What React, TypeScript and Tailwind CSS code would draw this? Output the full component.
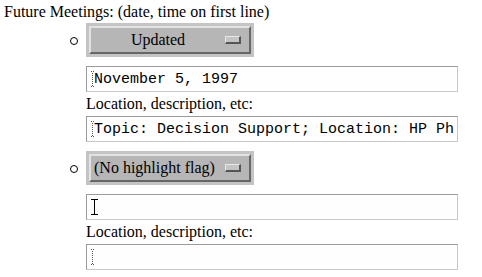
import React from "react";

const serif = { fontFamily: '"Liberation Serif", "Times New Roman", serif' };
const mono = { fontFamily: '"Liberation Mono", "Courier New", monospace' };

function DottedCaret() {
  return (
    <svg width="4" height="16" viewBox="0 0 4 16" className="shrink-0">
      <g fill="#555">
        <rect x="0" y="0" width="1" height="1" />
        <rect x="2" y="0" width="1" height="1" />
        {Array.from({ length: 7 }).map((_, i) => (
          <rect key={i} x="1" y={2 + i * 2} width="1" height="1" />
        ))}
        <rect x="0" y="15" width="1" height="1" />
        <rect x="2" y="15" width="1" height="1" />
      </g>
    </svg>
  );
}

function IBeam() {
  return (
    <svg width="7" height="16" viewBox="0 0 7 16" className="shrink-0">
      <g fill="#000">
        <rect x="0" y="0" width="7" height="1" />
        <rect x="3" y="1" width="1" height="14" />
        <rect x="0" y="15" width="7" height="1" />
      </g>
    </svg>
  );
}

function OptionButton({ label, center }: { label: string; center?: boolean }) {
  return (
    <div className="w-[168px] bg-[#c4c4c4] p-[3px]">
      <div className="flex h-[28px] items-center border-l-2 border-t-2 border-r-2 border-b-2 border-l-[#e2e2e2] border-t-[#e2e2e2] border-r-[#666666] border-b-[#666666] bg-[#b6b6b6]">
        <span
          className={`flex-1 whitespace-nowrap text-[16px] leading-none text-black ${center ? "text-center" : "pl-[3px]"}`}
          style={serif}
        >
          {label}
        </span>
        <span className="mr-[8px] h-[8px] w-[16px] shrink-0 border-l border-t border-r-2 border-b-2 border-l-[#e8e8e8] border-t-[#e8e8e8] border-r-[#555555] border-b-[#555555] bg-[#c4c4c4]" />
      </div>
    </div>
  );
}

function TextBox({ children }: { children?: React.ReactNode }) {
  return (
    <div className="flex h-[26px] w-[372px] items-center overflow-hidden whitespace-nowrap border border-t-[#9c9c9c] border-l-[#9c9c9c] border-r-[#c8c8c8] border-b-[#c8c8c8] bg-[#fefefe] pl-[4px]">
      {children}
    </div>
  );
}

function Label() {
  return (
    <div className="flex h-[24px] items-center text-[16px] leading-none text-black" style={serif}>
      Location, description, etc:
    </div>
  );
}

function Item({
  button,
  center,
  first,
  second,
}: {
  button: string;
  center?: boolean;
  first: React.ReactNode;
  second: React.ReactNode;
}) {
  return (
    <div className="flex">
      <div className="flex h-[35px] w-[20px] items-center pl-[4px]">
        <span className="block h-[8px] w-[8px] rounded-full border border-black" />
      </div>
      <div className="flex flex-col">
        <OptionButton label={button} center={center} />
        <div className="h-[9px]" />
        <TextBox>{first}</TextBox>
        <Label />
        <TextBox>{second}</TextBox>
      </div>
    </div>
  );
}

export default function App() {
  return (
    <div className="h-[277px] w-[482px] overflow-hidden bg-white text-black">
      <div className="pl-[4px] pt-[2px] text-[16px] leading-[19px]" style={serif}>
        Future Meetings: (date, time on first line)
      </div>
      <div className="flex flex-col gap-[9px] pl-[66px] pt-[2px]">
        <Item
          button="Updated"
          center
          first={
            <div className="flex items-center">
              <DottedCaret />
              <span className="-ml-[1px] text-[15px] leading-none" style={mono}>
                November 5, 1997
              </span>
            </div>
          }
          second={
            <div className="flex items-center">
              <DottedCaret />
              <span className="-ml-[1px] text-[15px] leading-none" style={mono}>
                Topic: Decision Support; Location: HP Ph
              </span>
            </div>
          }
        />
        <Item
          button="(No highlight flag)"
          first={<IBeam />}
          second={<DottedCaret />}
        />
      </div>
    </div>
  );
}
